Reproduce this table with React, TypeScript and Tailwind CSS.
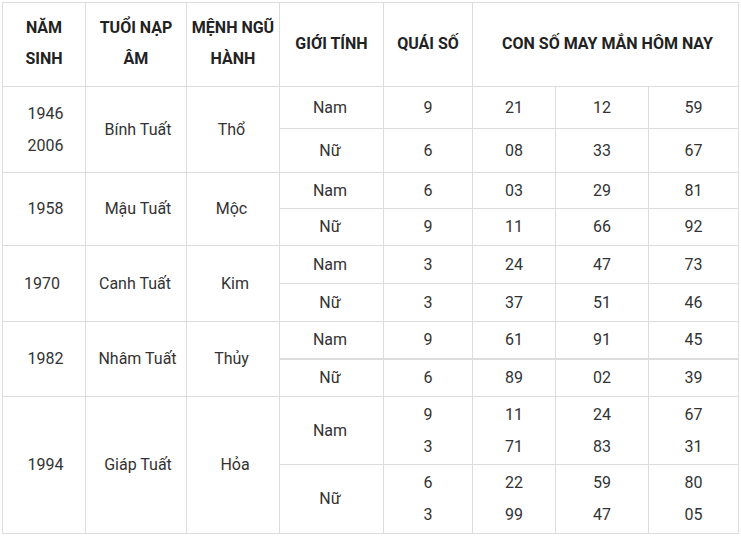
import React from "react";

type Gender = { label: string; quai: string[]; nums: string[][]; h: number; thick?: boolean };
type Group = {
  years: string[];
  napAm: string;
  menh: string;
  yearPad: string;
  napPad: string;
  menhPad: string;
  rows: Gender[];
};

const groups: Group[] = [
  {
    years: ["1946", "2006"],
    napAm: "Bính Tuất",
    menh: "Thổ",
    yearPad: "pl-[3px]",
    napPad: "pl-[4px]",
    menhPad: "pr-[3px]",
    rows: [
      { label: "Nam", quai: ["9"], nums: [["21", "12", "59"]], h: 42 },
      { label: "Nữ", quai: ["6"], nums: [["08", "33", "67"]], h: 44 },
    ],
  },
  {
    years: ["1958"],
    napAm: "Mậu Tuất",
    menh: "Mộc",
    yearPad: "pl-[3px]",
    napPad: "pl-[4px]",
    menhPad: "pr-[3px]",
    rows: [
      { label: "Nam", quai: ["6"], nums: [["03", "29", "81"]], h: 36 },
      { label: "Nữ", quai: ["9"], nums: [["11", "66", "92"]], h: 37 },
    ],
  },
  {
    years: ["1970"],
    napAm: "Canh Tuất",
    menh: "Kim",
    yearPad: "pr-[4px]",
    napPad: "pr-[2px]",
    menhPad: "pl-[4px]",
    rows: [
      { label: "Nam", quai: ["3"], nums: [["24", "47", "73"]], h: 38 },
      { label: "Nữ", quai: ["3"], nums: [["37", "51", "46"]], h: 38 },
    ],
  },
  {
    years: ["1982"],
    napAm: "Nhâm Tuất",
    menh: "Thủy",
    yearPad: "pl-[3px]",
    napPad: "pl-[3px]",
    menhPad: "pr-[3px]",
    rows: [
      { label: "Nam", quai: ["9"], nums: [["61", "91", "45"]], h: 37, thick: true },
      { label: "Nữ", quai: ["6"], nums: [["89", "02", "39"]], h: 38 },
    ],
  },
  {
    years: ["1994"],
    napAm: "Giáp Tuất",
    menh: "Hỏa",
    yearPad: "pl-[3px]",
    napPad: "pl-[4px]",
    menhPad: "pl-[4px]",
    rows: [
      { label: "Nam", quai: ["9", "3"], nums: [["11", "24", "67"], ["71", "83", "31"]], h: 68 },
      { label: "Nữ", quai: ["6", "3"], nums: [["22", "59", "80"], ["99", "47", "05"]], h: 69 },
    ],
  },
];

const cell = "border border-[#dddddd] p-0 text-center align-middle";

const Lines = ({ items }: { items: string[] }) => (
  <>
    {items.map((v, i) => (
      <div key={i} className="leading-[32px]">
        {v}
      </div>
    ))}
  </>
);

const App = () => {
  return (
    <div className="min-h-screen bg-white pl-[2px] pt-[2px] font-['Roboto','Liberation_Sans',sans-serif] text-[16px] text-[#333333]">
      <table className="w-[736px] table-fixed border-collapse">
        <colgroup>
          <col className="w-[83px]" />
          <col className="w-[101px]" />
          <col className="w-[93px]" />
          <col className="w-[104px]" />
          <col className="w-[89px]" />
          <col className="w-[83px]" />
          <col className="w-[93px]" />
          <col className="w-[90px]" />
        </colgroup>
        <thead>
          <tr className="h-[84px] font-bold text-[#222222]">
            <th className={`${cell} pb-[3px] leading-[31px]`}>
              NĂM
              <br />
              SINH
            </th>
            <th className={`${cell} pb-[3px] leading-[31px]`}>
              TUỔI NẠP
              <br />
              ÂM
            </th>
            <th className={`${cell} pb-[3px] leading-[31px]`}>
              MỆNH NGŨ
              <br />
              HÀNH
            </th>
            <th className={`${cell} pb-[2px]`}>GIỚI TÍNH</th>
            <th className={`${cell} pb-[2px]`}>QUÁI SỐ</th>
            <th className={`${cell} pb-[2px] pl-[4px]`} colSpan={3}>
              CON SỐ MAY MẮN HÔM NAY
            </th>
          </tr>
        </thead>
        <tbody>
          {groups.map((g) =>
            g.rows.map((r, ri) => {
              const b = r.thick ? "border-b-2" : "";
              return (
                <tr key={g.years[0] + r.label} style={{ height: r.h }}>
                  {ri === 0 && (
                    <>
                      <td className={`${cell} ${g.yearPad} leading-[32px]`} rowSpan={g.rows.length}>
                        {g.years.map((y) => (
                          <div key={y}>{y}</div>
                        ))}
                      </td>
                      <td className={`${cell} ${g.napPad}`} rowSpan={g.rows.length}>
                        {g.napAm}
                      </td>
                      <td className={`${cell} ${g.menhPad}`} rowSpan={g.rows.length}>
                        {g.menh}
                      </td>
                    </>
                  )}
                  <td className={`${cell} ${b} pr-[3px]`}>{r.label}</td>
                  <td className={`${cell} ${b}`}>
                    <Lines items={r.quai} />
                  </td>
                  {[0, 1, 2].map((c) => (
                    <td key={c} className={`${cell} ${b}`}>
                      <Lines items={r.nums.map((n) => n[c])} />
                    </td>
                  ))}
                </tr>
              );
            })
          )}
        </tbody>
      </table>
    </div>
  );
};

export default App;
